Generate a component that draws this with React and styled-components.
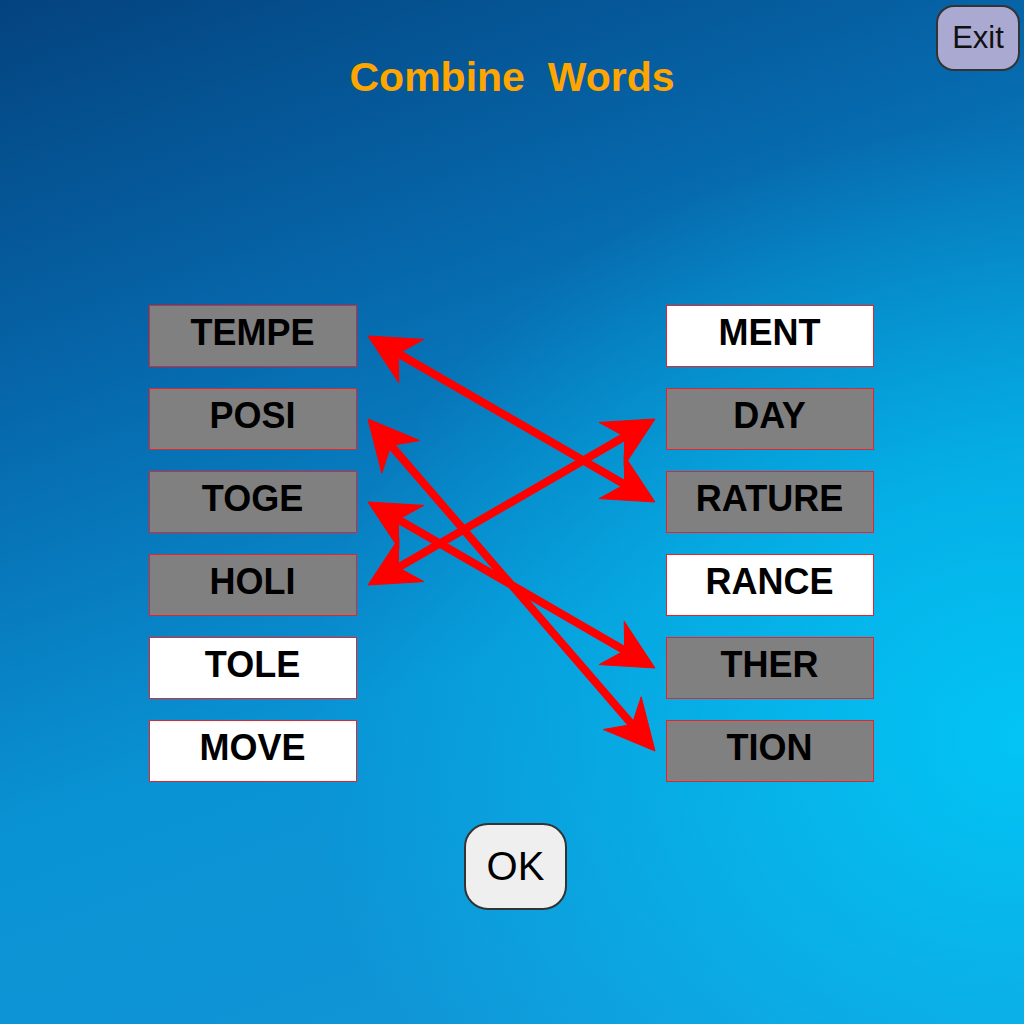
import React from "react";
import styled, { createGlobalStyle } from "styled-components";

const GlobalStyle = createGlobalStyle`
  html, body {
    margin: 0;
    padding: 0;
  }
  body {
    font-family: "Liberation Sans", Arial, sans-serif;
  }
`;

const Page = styled.div`
  width: 100%;
  min-height: 1024px;
  display: flex;
  flex-direction: column;
  align-items: center;
  background:
    radial-gradient(ellipse 70% 60% at 100% 72%, rgba(0, 205, 250, 0.85) 0%, rgba(0, 205, 250, 0) 100%),
    linear-gradient(160deg, #04437f 0%, #0668ac 30%, #0993d4 60%, #1596d8 100%);
`;

const TopBar = styled.div`
  width: 100%;
  display: grid;
  grid-template-columns: 1fr auto 1fr;
  height: 100px;
`;

const Title = styled.h1`
  grid-column: 2;
  margin: 54px 0 0;
  font-size: 41px;
  line-height: 46px;
  font-weight: 700;
  color: #ffa500;
  white-space: pre;
`;

const ExitButton = styled.button`
  grid-column: 3;
  justify-self: end;
  align-self: start;
  margin: 5px 4px 0 0;
  box-sizing: border-box;
  width: 84px;
  height: 66px;
  padding: 0;
  border: 2px solid #333;
  border-radius: 18px;
  background: #aaa9d1;
  color: #111;
  font-family: "Liberation Sans", Arial, sans-serif;
  font-size: 31px;
`;

const Board = styled.div`
  position: relative;
  margin: 205px 2px 0 0;
  width: 725px;
  display: flex;
  justify-content: space-between;
`;

const Column = styled.div`
  display: flex;
  flex-direction: column;
  gap: 21px;
`;

const WordBox = styled.div`
  box-sizing: border-box;
  width: 208px;
  height: 62px;
  padding-bottom: 6px;
  display: flex;
  align-items: center;
  justify-content: center;
  border: 1px solid #e8232b;
  background: ${(p) => (p.$matched ? "#808080" : "#ffffff")};
  color: #000;
  font-size: 36px;
  font-weight: 700;
`;

const ArrowLayer = styled.svg`
  position: absolute;
  left: 0;
  top: 0;
  width: 725px;
  height: 477px;
  overflow: visible;
  pointer-events: none;
`;

const OkButton = styled.button`
  margin: 41px 0 0 7px;
  box-sizing: border-box;
  width: 103px;
  height: 87px;
  padding: 0;
  border: 2px solid #333;
  border-radius: 24px;
  background: #efefef;
  color: #000;
  font-family: "Liberation Sans", Arial, sans-serif;
  font-size: 40px;
`;

const leftWords = [
  { text: "TEMPE", matched: true },
  { text: "POSI", matched: true },
  { text: "TOGE", matched: true },
  { text: "HOLI", matched: true },
  { text: "TOLE", matched: false },
  { text: "MOVE", matched: false },
];

const rightWords = [
  { text: "MENT", matched: false },
  { text: "DAY", matched: true },
  { text: "RATURE", matched: true },
  { text: "RANCE", matched: false },
  { text: "THER", matched: true },
  { text: "TION", matched: true },
];

// left row -> right row
const links = [
  [0, 2],
  [1, 5],
  [2, 4],
  [3, 1],
];

const ROW = 83;
const LEFT_X = 219;
const RIGHT_X = 506;

const head = (tx, ty, ux, uy) => {
  // ux,uy points from tip back along the shaft
  const px = -uy;
  const py = ux;
  const pt = (back, side) =>
    `${(tx + ux * back + px * side).toFixed(1)},${(ty + uy * back + py * side).toFixed(1)}`;
  return [pt(0, 0), pt(50, 25), pt(35, 0), pt(50, -25)].join(" ");
};

const Arrow = ({ from, to }) => {
  const x1 = LEFT_X;
  const y1 = from * ROW + 31;
  const x2 = RIGHT_X;
  const y2 = to * ROW + 31;
  const len = Math.hypot(x2 - x1, y2 - y1);
  const ux = (x2 - x1) / len;
  const uy = (y2 - y1) / len;
  return (
    <g fill="#ff0000" stroke="#ff0000">
      <line
        x1={x1 + ux * 30}
        y1={y1 + uy * 30}
        x2={x2 - ux * 30}
        y2={y2 - uy * 30}
        strokeWidth="8"
      />
      <polygon points={head(x1, y1, ux, uy)} strokeWidth="1" />
      <polygon points={head(x2, y2, -ux, -uy)} strokeWidth="1" />
    </g>
  );
};

export default function App() {
  return (
    <>
      <GlobalStyle />
      <Page>
        <TopBar>
          <Title>Combine  Words</Title>
          <ExitButton>Exit</ExitButton>
        </TopBar>
        <Board>
          <Column>
            {leftWords.map((w) => (
              <WordBox key={w.text} $matched={w.matched}>
                {w.text}
              </WordBox>
            ))}
          </Column>
          <Column>
            {rightWords.map((w) => (
              <WordBox key={w.text} $matched={w.matched}>
                {w.text}
              </WordBox>
            ))}
          </Column>
          <ArrowLayer viewBox="0 0 725 477">
            {links.map(([a, b]) => (
              <Arrow key={a} from={a} to={b} />
            ))}
          </ArrowLayer>
        </Board>
        <OkButton>OK</OkButton>
      </Page>
    </>
  );
}
